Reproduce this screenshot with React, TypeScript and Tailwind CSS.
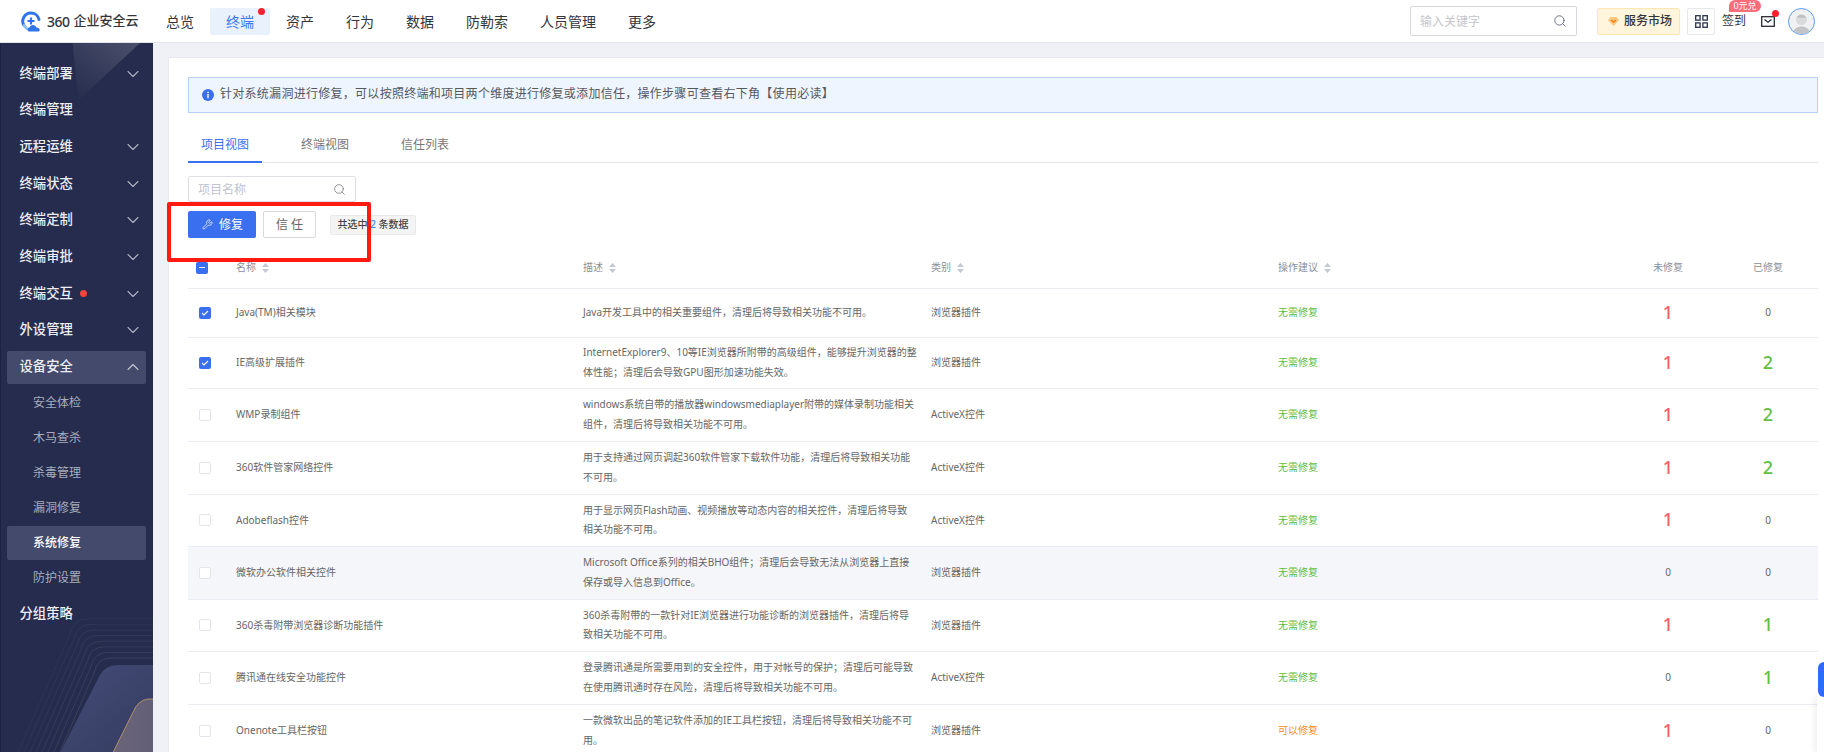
import { ChevronDown, ChevronUp, Search, Wrench } from "lucide-react";

const navItems = ["总览", "终端", "资产", "行为", "数据", "防勒索", "人员管理", "更多"];

const rows = [
    { h: "h-[49px]", name: "Java(TM)相关模块", desc: ["Java开发工具中的相关重要组件，清理后将导致相关功能不可用。"], type: "浏览器插件", tip: "无需修复", un: 1, done: 0, checked: true },
    { h: "h-[51px]", name: "IE高级扩展插件", desc: ["InternetExplorer9、10等IE浏览器所附带的高级组件，能够提升浏览器的整", "体性能；清理后会导致GPU图形加速功能失效。"], type: "浏览器插件", tip: "无需修复", un: 1, done: 2, checked: true },
    { h: "h-[53px]", name: "WMP录制组件", desc: ["windows系统自带的播放器windowsmediaplayer附带的媒体录制功能相关", "组件，清理后将导致相关功能不可用。"], type: "ActiveX控件", tip: "无需修复", un: 1, done: 2 },
    { h: "h-[53px]", name: "360软件管家网络控件", desc: ["用于支持通过网页调起360软件管家下载软件功能，清理后将导致相关功能", "不可用。"], type: "ActiveX控件", tip: "无需修复", un: 1, done: 2 },
    { h: "h-[52px]", name: "Adobeflash控件", desc: ["用于显示网页Flash动画、视频播放等动态内容的相关控件，清理后将导致", "相关功能不可用。"], type: "ActiveX控件", tip: "无需修复", un: 1, done: 0 },
    { h: "h-[53px]", name: "微软办公软件相关控件", desc: ["Microsoft Office系列的相关BHO组件；清理后会导致无法从浏览器上直接", "保存或导入信息到Office。"], type: "浏览器插件", tip: "无需修复", un: 0, done: 0, hover: true },
    { h: "h-[52px]", name: "360杀毒附带浏览器诊断功能插件", desc: ["360杀毒附带的一款针对IE浏览器进行功能诊断的浏览器插件，清理后将导", "致相关功能不可用。"], type: "浏览器插件", tip: "无需修复", un: 1, done: 1 },
    { h: "h-[53px]", name: "腾讯通在线安全功能控件", desc: ["登录腾讯通是所需要用到的安全控件，用于对帐号的保护；清理后可能导致", "在使用腾讯通时存在风险，清理后将导致相关功能不可用。"], type: "ActiveX控件", tip: "无需修复", un: 0, done: 1 },
    { h: "h-[53px]", name: "Onenote工具栏按钮", desc: ["一款微软出品的笔记软件添加的IE工具栏按钮，清理后将导致相关功能不可", "用。"], type: "浏览器插件", tip: "可以修复", un: 1, done: 0 },
];

const tableCols = "grid grid-cols-[48px_347px_348px_347px_340px_100px_100px] items-center pb-[1px]";

function SortIcon() {
    return (
        <svg width="7" height="10" viewBox="0 0 7 10" className="ml-[6px] shrink-0">
            <path d="M3.5 0 7 4H0z" fill="#c4c8d2" />
            <path d="M3.5 10 0 6h7z" fill="#c4c8d2" />
        </svg>
    );
}

function Checkbox({ checked, className }: { checked?: boolean; className?: string }) {
    return (
        <div className={`w-3 h-3 rounded-[2px] flex items-center justify-center ${checked ? "bg-[#3a6ff0]" : "bg-white border border-[#e3e5ea]"} ${className ?? ""}`}>
            {checked && (
                <svg width="8" height="6" viewBox="0 0 8 6" fill="none">
                    <path d="M1 3l2 2 4-4" stroke="#fff" strokeWidth="1.1" />
                </svg>
            )}
        </div>
    );
}

function Count({ value, tone }: { value: number; tone: string }) {
    if (value === 0) return <span className="text-[10px] text-[#666]">0</span>;
    return <span className={`text-[18px] leading-none font-medium ${tone}`}>{value}</span>;
}

function Logo() {
    return (
        <svg width="22" height="23" viewBox="0 0 22 23" fill="none" className="shrink-0">
            <path d="M4 15.5A8.2 8.2 0 0 1 11 3a8.2 8.2 0 0 1 8 6.5" stroke="#2f74ea" strokeWidth="3" strokeLinecap="round" />
            <path d="M4.2 15.5c1.2 2.4 3 3.6 5 4.2" stroke="#8fc0fa" strokeWidth="3" strokeLinecap="round" />
            <path d="M11 7.5v7M7.5 11h7" stroke="#2f74ea" strokeWidth="2.2" />
            <path d="M10 21.5c-1.6 0-2.4-1-2.4-2.1 0-1 .8-1.9 1.9-2 .5-1.5 1.7-2.4 3.3-2.4 1.8 0 3.1 1.1 3.5 2.6 1.8-.2 3.4 1 3.4 2.3 0 .9-.7 1.6-1.8 1.6z" fill="#2f74ea" />
        </svg>
    );
}

function SidebarDecor() {
    // slanted nested outlines at the foot of the menu
    const lines = [0, 1, 2, 3, 4, 5, 6, 7];
    return (
        <svg className="absolute inset-0 w-full h-full pointer-events-none" viewBox="0 43 153 709" preserveAspectRatio="none">
            <defs>
                <linearGradient id="topGlow" x1="1" y1="0" x2="0" y2="1">
                    <stop offset="0" stopColor="#fff" stopOpacity="0.17" />
                    <stop offset="1" stopColor="#fff" stopOpacity="0" />
                </linearGradient>
                <linearGradient id="blockA" x1="0" y1="0" x2="1" y2="1">
                    <stop offset="0" stopColor="#454d78" />
                    <stop offset="1" stopColor="#333b60" />
                </linearGradient>
                <linearGradient id="blockB" x1="0" y1="0" x2="1" y2="0">
                    <stop offset="0" stopColor="#6b6478" />
                    <stop offset="1" stopColor="#625f78" />
                </linearGradient>
            </defs>
            <path d="M72 43H140L78 100Z" fill="url(#topGlow)" />
            {lines.map(i => {
                const top = 658 - i * 5.6;
                const left = 97 - i * 3.4;
                return (
                    <path
                        key={i}
                        d={`M${left - (752 - top - 14) * 0.47} 752L${left - 3} ${top + 14}Q${left} ${top} ${left + 14} ${top}H153`}
                        fill="none"
                        stroke="#fff"
                        strokeOpacity={0.1 - i * 0.008}
                    />
                );
            })}
            <path d="M60 752 98 678Q104 665 118 665H153V752Z" fill="url(#blockA)" />
            <path d="M113 752 133 712Q138 700 148 699H153V752Z" fill="url(#blockB)" />
            <path d="M113 752 133 712Q138 700 148 699H153" fill="none" stroke="#c8a06a" strokeWidth="0.8" />
        </svg>
    );
}

function MenuRow({ label, open, chevron = true, dot, active }: { label: string; open?: boolean; chevron?: boolean; dot?: boolean; active?: boolean }) {
    return (
        <div className="h-[36.7px] flex items-center">
            <div className={`mx-[7px] flex-1 h-[33px] flex items-center pl-[12.5px] pr-[3px] rounded-[2px] ${active ? "bg-[#434a6b]" : ""}`}>
                <span className="text-[13.33px] font-medium text-[#eceef4]">{label}</span>
                {dot && <span className="ml-[7px] w-[7px] h-[7px] rounded-full bg-[#f4443c]" />}
                {chevron && (open
                    ? <ChevronUp size={20} strokeWidth={1.3} className="ml-auto text-[#c4c7d4]" />
                    : <ChevronDown size={20} strokeWidth={1.3} className="ml-auto text-[#aeb2c4]" />)}
            </div>
        </div>
    );
}

function SubRow({ label, active }: { label: string; active?: boolean }) {
    return (
        <div className="h-[35px] flex items-center">
            <div className={`mx-[7px] flex-1 h-[34px] flex items-center pl-[26px] rounded-[2px] ${active ? "bg-[#434a6b]" : ""}`}>
                <span className={`text-[12px] ${active ? "text-white font-medium" : "text-[#a9adbc]"}`}>{label}</span>
            </div>
        </div>
    );
}

export default function App() {
    return (
        <div className="relative w-[1824px] h-[752px] overflow-hidden flex flex-col bg-[#f0f1f6] font-['Noto_Sans','Noto_Sans_CJK_SC',sans-serif]">
            {/* Header */}
            <header className="h-[43px] shrink-0 bg-white border-b border-[#e4e5ea] flex items-center pl-[20px] pr-[9px]">
                <div className="w-[130px] flex items-center gap-[5px]">
                    <Logo />
                    <div className="flex items-center text-[#33343a] font-medium whitespace-nowrap">
                        <span className="text-[14px] tracking-[-0.5px]">360</span>
                        <span className="text-[13px] ml-[4px]">企业安全云</span>
                    </div>
                </div>
                <nav className="flex items-center">
                    {navItems.map(item => (
                        <div key={item} className={`relative h-[27px] px-4 flex items-center text-[14px] rounded-[2px] ${item === "终端" ? "bg-[#e9f1fd] text-[#3a78f2]" : "text-[#33353c]"}`}>
                            {item}
                            {item === "终端" && <span className="absolute top-[0px] right-[5px] w-[7px] h-[7px] rounded-full bg-[#f5222d]" />}
                        </div>
                    ))}
                </nav>
                <div className="ml-auto flex items-center">
                    <div className="w-[167px] h-[30px] border border-[#d5d7de] rounded-[2px] flex items-center pl-[9px] pr-[9px]">
                        <span className="text-[12px] text-[#c4c6cc] pt-[2px]">输入关键字</span>
                        <Search size={14} strokeWidth={1.5} className="ml-auto text-[#5f6478]" />
                    </div>
                    <div className="ml-[20px] w-[83px] h-[27px] rounded-[2px] bg-[#fff5dd] border border-[#fbe6b4] flex items-center pl-[10px]">
                        <svg width="11" height="9" viewBox="0 0 11 9" className="shrink-0">
                            <path d="M2.5 0h6L11 3 5.5 9 0 3z" fill="#fbc77a" />
                            <path d="M3.2 3l2.3 2.2L7.8 3" fill="none" stroke="#f07a10" strokeWidth="1.2" />
                        </svg>
                        <span className="ml-[5px] text-[12px] font-medium text-[#33343a]">服务市场</span>
                    </div>
                    <div className="ml-[7px] w-[28px] h-[27px] rounded-[2px] border border-[#e6e8ee] flex items-center justify-center">
                        <svg width="13" height="13" viewBox="0 0 13 13" fill="none" stroke="#2b3352" strokeWidth="1.3">
                            <rect x="0.7" y="0.7" width="4.4" height="4.4" />
                            <rect x="7.9" y="0.7" width="4.4" height="4.4" />
                            <rect x="0.7" y="7.9" width="4.4" height="4.4" />
                            <rect x="7.9" y="7.9" width="4.4" height="4.4" />
                        </svg>
                    </div>
                    <div className="relative ml-[7px] w-[24px] text-[12px] text-[#33343a]">
                        签到
                        <span className="absolute -top-[12px] left-[7px] w-[32px] h-[12px] rounded-[6px] rounded-bl-none bg-[#ff6b78] text-white text-[9px] leading-[12px] text-center whitespace-nowrap">0元兑</span>
                    </div>
                    <div className="relative ml-[15px] w-[14px] h-[11px]">
                        <svg width="14" height="11" viewBox="0 0 14 11" fill="none" stroke="#2a2c33" strokeWidth="1.3" className="block">
                            <rect x="0.7" y="0.7" width="12.6" height="9.6" />
                            <path d="M3.5 3.6 7 6.2l3.5-2.6" />
                        </svg>
                        <span className="absolute -top-[6px] -right-[4px] w-[7px] h-[7px] rounded-full bg-[#f5222d]" />
                    </div>
                    <div className="ml-[13px] w-[27px] h-[27px] rounded-full border border-[#5b9bf5] overflow-hidden bg-[#f0f1f2]">
                        <svg width="25" height="25" viewBox="0 0 25 25">
                            <circle cx="12.5" cy="10.5" r="5.5" fill="#d9dadc" />
                            <path d="M8 8c2-2.5 6-3 9 .5-3 .5-6 .5-9-.5z" fill="#bdbec1" />
                            <path d="M3.5 25c1-5.500 5-7.500 9-7.500s8 2 9 7.500z" fill="#c3c4c7" />
                        </svg>
                    </div>
                </div>
            </header>

            <div className="flex-1 flex min-h-0">
                {/* Sidebar */}
                <aside className="relative w-[153px] shrink-0 bg-[#252c4d] border-l border-[#1c2240] overflow-hidden">
                    <SidebarDecor />
                    <div className="relative pt-[12.2px] -ml-px">
                        <MenuRow label="终端部署" />
                        <MenuRow label="终端管理" chevron={false} />
                        <MenuRow label="远程运维" />
                        <MenuRow label="终端状态" />
                        <MenuRow label="终端定制" />
                        <MenuRow label="终端审批" />
                        <MenuRow label="终端交互" dot />
                        <MenuRow label="外设管理" />
                        <MenuRow label="设备安全" open active />
                        <SubRow label="安全体检" />
                        <SubRow label="木马查杀" />
                        <SubRow label="杀毒管理" />
                        <SubRow label="漏洞修复" />
                        <SubRow label="系统修复" active />
                        <SubRow label="防护设置" />
                        <MenuRow label="分组策略" chevron={false} />
                    </div>
                </aside>

                {/* Main */}
                <main className="flex-1 min-w-0 pl-[15px] pt-[14px]">
                    <div className="h-full bg-white border-t border-l border-[#e8e9ee] pl-[19px] pr-[6px] pt-[19px]">
                        <div className="h-[36px] bg-[#eef5fe] border border-[#b6d0f8] flex items-center pl-[13px]">
                            <svg width="12" height="12" viewBox="0 0 12 12" className="shrink-0">
                                <circle cx="6" cy="6" r="6" fill="#3a6ff0" />
                                <rect x="5.300" y="5" width="1.400" height="4.200" fill="#fff" />
                                <rect x="5.300" y="2.800" width="1.400" height="1.400" fill="#fff" />
                            </svg>
                            <span className="ml-[6px] pb-[2px] text-[12px] text-[#55585f] tracking-[0.28px]">针对系统漏洞进行修复，可以按照终端和项目两个维度进行修复或添加信任，操作步骤可查看右下角【使用必读】</span>
                        </div>

                        <div className="mt-[13px] h-[37px] flex gap-[26px] border-b border-[#e4e7ed]">
                            <div className="h-[37px] px-[13px] pt-[2px] flex items-center text-[12px] text-[#3a6ff0] border-b-2 border-[#3a6ff0]">项目视图</div>
                            <div className="h-[36px] px-[13px] pt-[2px] flex items-center text-[12px] text-[#777]">终端视图</div>
                            <div className="h-[36px] px-[13px] pt-[2px] flex items-center text-[12px] text-[#777]">信任列表</div>
                        </div>

                        <div className="mt-[13px] w-[168px] h-[26px] border border-[#dcdfe6] rounded-[2px] flex items-center pl-[9px] pr-[9px]">
                            <span className="text-[12px] text-[#c0c4cc] pt-[2px]">项目名称</span>
                            <Search size={13} strokeWidth={1.4} className="ml-auto text-[#777]" />
                        </div>

                        <div className="mt-[9px] flex items-center">
                            <div className="w-[68px] h-[27px] rounded-[2px] bg-[#3a6ff0] flex items-center pl-[14px] text-white text-[12px]">
                                <Wrench size={11} strokeWidth={1.6} />
                                <span className="ml-[6px]">修复</span>
                            </div>
                            <div className="ml-[7px] w-[53px] h-[27px] rounded-[2px] border border-[#d9d9d9] flex items-center justify-center text-[12px] text-[#666]">信 任</div>
                            <div className="ml-[14px] w-[86px] h-[20px] rounded-[2px] bg-[#f4f4f5] border border-[#e9e9eb] flex items-center justify-center text-[10px] text-[#444] font-medium whitespace-pre">
                                共选中 <span className="text-[#3a8ef0]">2</span> 条数据
                            </div>
                        </div>

                        {/* Table */}
                        <div className="mt-[10px]">
                            <div className={`${tableCols} h-[41px] border-b border-[#e9ecf5] text-[10px] text-[#8d9098]`}>
                                <Checkbox checked={false} className="ml-[8px] !bg-[#3a6ff0] !border-0 relative after:content-[''] after:w-[6px] after:h-px after:bg-white" />
                                <div className="flex items-center">名称<SortIcon /></div>
                                <div className="flex items-center">描述<SortIcon /></div>
                                <div className="flex items-center">类别<SortIcon /></div>
                                <div className="flex items-center">操作建议<SortIcon /></div>
                                <div className="text-center">未修复</div>
                                <div className="text-center">已修复</div>
                            </div>
                            {rows.map(row => (
                                <div key={row.name} className={`${tableCols} ${row.h} border-b border-[#e9ecf5] text-[10px] text-[#666] ${row.hover ? "bg-[#f5f6fa]" : ""}`}>
                                    <Checkbox checked={row.checked} className="ml-[11px]" />
                                    <div className="whitespace-nowrap">{row.name}</div>
                                    <div className="leading-[19.5px] whitespace-nowrap">
                                        {row.desc.map(line => <div key={line}>{line}</div>)}
                                    </div>
                                    <div>{row.type}</div>
                                    <div className={row.tip === "可以修复" ? "text-[#f98c17]" : "text-[#62bd3c]"}>{row.tip}</div>
                                    <div className="text-center"><Count value={row.un} tone="text-[#fb5a66]" /></div>
                                    <div className="text-center"><Count value={row.done} tone="text-[#62c043]" /></div>
                                </div>
                            ))}
                        </div>
                    </div>
                </main>
            </div>

            {/* Screenshot annotation */}
            <div className="absolute left-[167px] top-[202px] w-[204px] h-[60px] border-4 border-[#ff1a12] rounded-[2px] pointer-events-none" />

            {/* Floating help tab */}
            <div className="absolute right-0 top-[662px] w-[6px] h-[35px] rounded-l-[12px] bg-[#2f6bff]" />
            <div className="absolute right-0 top-[697px] w-[7px] h-[55px] bg-white shadow-[-2px_0_6px_rgba(0,0,0,0.08)]" />
        </div>
    );
}
